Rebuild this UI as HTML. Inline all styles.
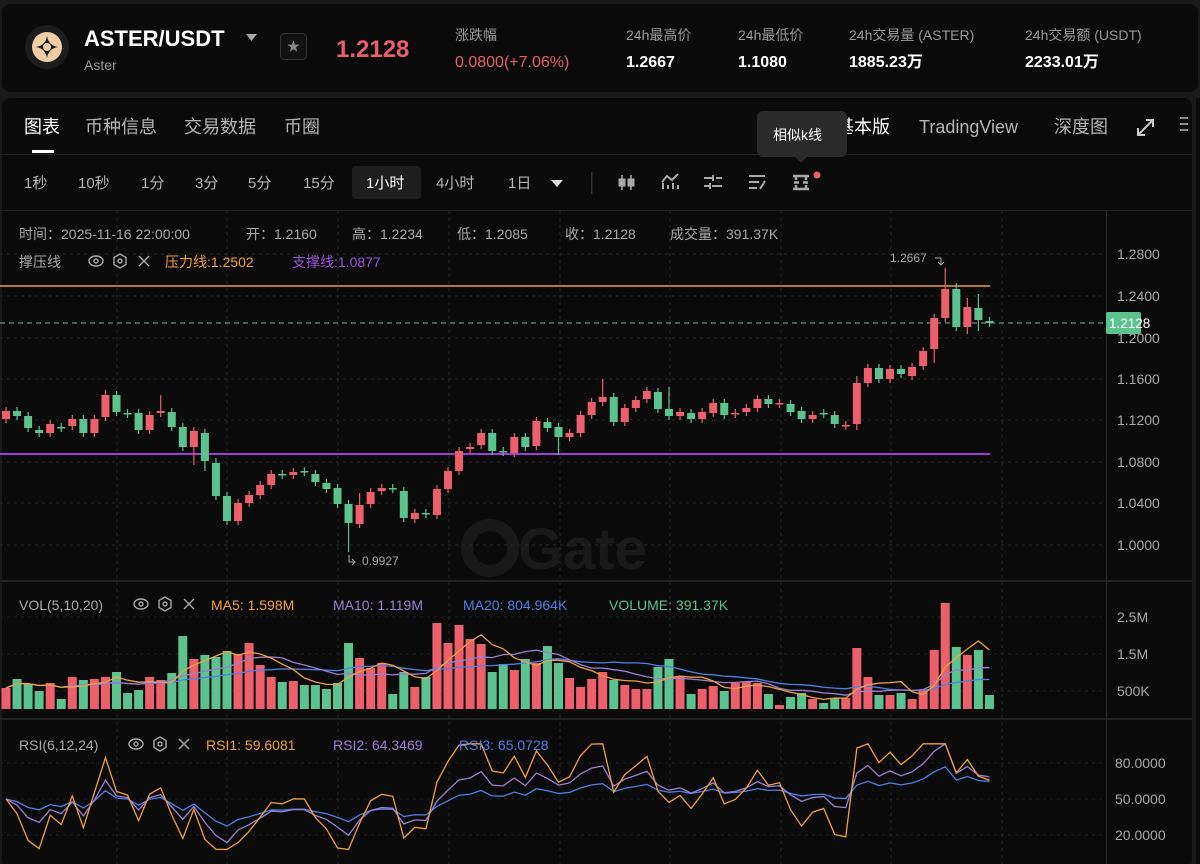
<!DOCTYPE html>
<html><head><meta charset="utf-8">
<style>
html,body{margin:0;padding:0;background:#1a1a1a;width:1200px;height:864px;overflow:hidden}
svg{display:block}
text{font-family:"Liberation Sans","Noto Sans CJK SC",sans-serif}
</style></head>
<body>
<svg id="s" width="1200" height="864" viewBox="0 0 1200 864" xmlns="http://www.w3.org/2000/svg">
<rect x="0" y="0" width="1200" height="864" fill="#1a1a1a"/>
<rect x="2" y="4" width="1196" height="88" rx="8" fill="#0b0b0b"/>
<rect x="2" y="98" width="1190" height="770" rx="8" fill="#0b0b0b"/>
<rect x="1196" y="98" width="10" height="770" fill="#0b0b0b"/>
<!-- logo -->
<circle cx="47" cy="47" r="22" fill="#1d1d1d"/>
<circle cx="47" cy="47" r="15" fill="#f1cda3"/>
<path d="M47 36 Q48.5 45.5 58 47 Q48.5 48.5 47 58 Q45.5 48.5 36 47 Q45.5 45.5 47 36Z" fill="#141414"/>
<circle cx="47" cy="47" r="4" fill="#f1cda3"/>
<text x="84" y="46" font-size="22" font-weight="bold" fill="#fff">ASTER/USDT</text>
<path d="M246 34 L257 34 L251.5 41Z" fill="#aaa"/>
<text x="84" y="70" font-size="14" fill="#9a9a9a">Aster</text>
<rect x="280.5" y="33.5" width="26" height="26" rx="4" fill="#111" stroke="#333"/>
<path d="M293.5 40 L295 44.5 L299.5 44.6 L296 47.4 L297.2 51.8 L293.5 49.2 L289.8 51.8 L291 47.4 L287.5 44.6 L292 44.5Z" fill="#888"/>
<text x="336" y="57" font-size="24" font-weight="bold" fill="#e8606c">1.2128</text>
<text x="455" y="40" font-size="14" fill="#9a9a9a">涨跌幅</text>
<text x="455" y="67" font-size="16" fill="#e8606c">0.0800(+7.06%)</text>
<g font-size="14" fill="#9a9a9a">
<text x="626" y="40">24h最高价</text><text x="738" y="40">24h最低价</text>
<text x="849" y="40">24h交易量 (ASTER)</text><text x="1025" y="40">24h交易额 (USDT)</text></g>
<g font-size="16" fill="#fff" font-weight="bold">
<text x="626" y="67">1.2667</text><text x="738" y="67">1.1080</text>
<text x="849" y="67">1885.23万</text><text x="1025" y="67">2233.01万</text></g>
<!-- tabs -->
<text x="24" y="133" font-size="18" fill="#fff">图表</text>
<rect x="32" y="150" width="22" height="3" fill="#fff"/>
<g font-size="18" fill="#b5b5b5"><text x="85" y="133">币种信息</text><text x="184" y="133">交易数据</text><text x="284" y="133">币圈</text>
<text x="836" y="133" fill="#fff">基本版</text><text x="919" y="133">TradingView</text><text x="1054" y="133">深度图</text></g>
<g stroke="#ccc" stroke-width="2" fill="none"><path d="M1139 134 L1152 121 M1146 120 L1153 120 L1153 127 M1138 128 L1138 135 L1145 135"/></g>
<g stroke="#888" stroke-width="2"><path d="M1180 118h8M1180 124h8M1180 130h8"/></g>
<rect x="0" y="154" width="1192" height="1" fill="#222"/>
<!-- tooltip -->
<rect x="757" y="111" width="90" height="46" rx="6" fill="#2b2b2b"/>
<path d="M795 157 L801 163 L807 157Z" fill="#2b2b2b"/>
<text x="773" y="140" font-size="14" fill="#fff">相似k线</text>
<!-- intervals -->
<rect x="352" y="166" width="69" height="33" rx="4" fill="#1f1f1f"/>
<g font-size="15" fill="#b5b5b5">
<text x="24" y="188">1秒</text><text x="78" y="188">10秒</text><text x="141" y="188">1分</text><text x="195" y="188">3分</text>
<text x="248" y="188">5分</text><text x="303" y="188">15分</text><text x="366" y="188" fill="#fff">1小时</text>
<text x="436" y="188">4小时</text><text x="508" y="188">1日</text></g>
<path d="M551 180 L563 180 L557 187Z" fill="#ddd"/>
<rect x="591" y="172" width="1.5" height="22" fill="#333"/>
<g fill="#aaa" stroke="#aaa">
<path d="M622 175v15M631 175v15" stroke-width="1.5"/><rect x="618.5" y="178.5" width="7" height="8" stroke="none"/><rect x="627.5" y="178.5" width="7" height="8" stroke="none"/>
<path d="M663 189v-6M668 189v-4M673 189v-6M678 189v-4" stroke-width="2"/>
<path d="M662 182 L667 176 L672 180 L678 174" fill="none" stroke-width="2"/>
<path d="M704 178h9M716 178h6M704 186h5M712 186h10M713 175v6M710 183v6" stroke-width="2" fill="none"/>
<path d="M749 176h16M749 182h10M749 188h8M760 189 L765 181" stroke-width="2" fill="none"/>
<path d="M793 176h16M793 189h16M796 176v4M806 176v4M796 185v4M806 185v4M794 182.5h14" stroke-width="2.5" fill="none"/>
</g>
<rect x="799" y="178" width="4" height="8" fill="#0b0b0b"/>
<circle cx="817" cy="175" r="3.5" fill="#e8606c"/>
<rect x="0" y="210" width="1192" height="1" fill="#222"/>
<!-- watermark -->
<g opacity="0.06" fill="#fff"><circle cx="490" cy="548" r="23" fill="none" stroke="#fff" stroke-width="12"/>
<text x="518" y="569" font-size="58" font-weight="bold">Gate</text></g>
<g id="chart"></g>
<!-- axis border -->
<rect x="1106" y="211" width="1" height="657" fill="#2a2a2a"/>
<rect x="0" y="580" width="1192" height="2" fill="#222"/>
<rect x="0" y="718" width="1192" height="2" fill="#222"/>
<!-- info -->
<g font-size="14" fill="#a8a8a8">
<text x="19" y="239">时间：2025-11-16 22:00:00</text><text x="246" y="239">开：1.2160</text><text x="352" y="239">高：1.2234</text>
<text x="457" y="239">低：1.2085</text><text x="565" y="239">收：1.2128</text><text x="670" y="239">成交量：391.37K</text>
<text x="19" y="267">撑压线</text>
<text x="19" y="610">VOL(5,10,20)</text>
<text x="19" y="750">RSI(6,12,24)</text></g>
<g font-size="14">
<text x="165" y="267" fill="#f0a040">压力线:1.2502</text><text x="292" y="267" fill="#a052e0">支撑线:1.0877</text>
<text x="211" y="610" fill="#f0a040">MA5: 1.598M</text><text x="333" y="610" fill="#9a7fd2">MA10: 1.119M</text>
<text x="463" y="610" fill="#4f7fe6">MA20: 804.964K</text><text x="609" y="610" fill="#5cc38f">VOLUME: 391.37K</text>
<text x="206" y="750" fill="#f0a040">RSI1: 59.6081</text><text x="333" y="750" fill="#9a7fd2">RSI2: 64.3469</text>
<text x="459" y="750" fill="#4f7fe6">RSI3: 65.0728</text></g>
<g id="icons" stroke="#aaa" stroke-width="1.4" fill="none"></g>
<g font-size="14" fill="#a8a8a8">
<text x="1117" y="259">1.2800</text><text x="1117" y="301">1.2400</text><text x="1117" y="343">1.2000</text>
<text x="1117" y="384">1.1600</text><text x="1117" y="425">1.1200</text><text x="1117" y="467">1.0800</text>
<text x="1117" y="508">1.0400</text><text x="1117" y="550">1.0000</text>
<text x="1117" y="622">2.5M</text><text x="1117" y="659">1.5M</text><text x="1117" y="696">500K</text>
<text x="1115" y="768">80.0000</text><text x="1115" y="804">50.0000</text><text x="1115" y="840">20.0000</text></g>
<rect x="1106" y="312" width="35" height="22" rx="2" fill="#5cc38f"/>
<text x="1109" y="328" font-size="13.5" fill="#fff">1.2128</text>
<text x="890" y="262" font-size="12" fill="#a8a8a8">1.2667</text>
<path d="M935 258h6v6M938 262l3 3 3-3" stroke="#aaa" fill="none"/>
<text x="362" y="565" font-size="12" fill="#a8a8a8">0.9927</text>
<path d="M349 555v7h6M352 559l3 3-3 3" stroke="#aaa" fill="none"/>
</svg>
<script>
var NS="http://www.w3.org/2000/svg",g=document.getElementById('chart');
function el(t,a,p){var e=document.createElementNS(NS,t);for(var k in a)e.setAttribute(k,a[k]);(p||g).appendChild(e);return e;}
var gx=[117,227,338,449,560,670,781,891,1002];
gx.forEach(function(x){el('line',{x1:x,y1:211,x2:x,y2:864,stroke:'#2a2a2a','stroke-dasharray':'3 4'});});
[254,296,338,379,420,462,503,545].forEach(function(y){el('line',{x1:0,y1:y,x2:1106,y2:y,stroke:'#2a2a2a','stroke-dasharray':'3 4'});});
[617,654,691,763,799,835].forEach(function(y){el('line',{x1:0,y1:y,x2:1106,y2:y,stroke:'#222','stroke-dasharray':'3 4'});});
el('line',{x1:0,y1:286,x2:990,y2:286,stroke:'#f0a040','stroke-width':1.5});
el('line',{x1:0,y1:454,x2:990,y2:454,stroke:'#9a3fd8','stroke-width':2});
el('line',{x1:0,y1:323,x2:1106,y2:323,stroke:'#5cc38f','stroke-dasharray':'5 4'});
var C="r411-419 g411-416 g416-428 g430-433 r424-433 g427-428 r419-426 g419-433 r419-433 r395-417 g395-412 g413-414 g413-430 r415-430 r411-413 g412-427 g427-447 r431-447 g433-461 g463-496 g496-521 r503-521 r495-503 r485-495 r474-485 g474-475 r472-475 g471-472 g474-482 g483-489 g488-504 g504-523 r505-524 r492-504 r488-491 g488-489 g491-518 r513-519 g513-514 r489-515 r471-489 r451-471 r447-449 r433-445 g433-451 g451-452 r437-453 g437-447 r421-446 g422-428 g427-437 r433-437 r415-433 r402-415 r397-402 g397-422 r408-422 r400-408 r391-399 g392-409 g409-416 r412-416 g413-419 r412-419 r403-413 g403-415 r413-414 r408-412 r399-408 g399-404 r403-404 g404-412 g411-419 r415-419 g413-414 g415-424 r425-426 r383-424 r368-383 g368-379 r369-379 g369-374 r367-376 r351-366 r318-349 r289-318 g289-327 r307-327 g308-320 g321-323".split(' ');
var W={10:[390],15:[395],19:[0,471],20:[458],32:[0,552],33:[493],51:[0,455],55:[379],61:[387],78:[376,430],85:[0,363],86:[268],87:[283,331],88:[298,334],89:[294,331],18:[0,465]};
var V=[688,679,684,691,683,699,677,680,679,677,672,693,690,677,680,673,636,659,655,657,651,654,643,665,677,682,681,685,685,689,683,643,658,668,663,694,672,687,677,623,643,625,639,644,672,664,670,659,663,646,663,678,687,679,672,680,685,689,689,667,659,677,694,689,686,691,683,682,683,694,705,697,693,699,703,698,698,648,677,695,695,693,699,690,650,603,647,655,650,695];
var RED='#ec5f6b',GRN='#5cc38f',closes=[],vols=[],xs=[];
C.forEach(function(s,i){var n=i+1,c=s[0]=='r'?RED:GRN,p=s.slice(1).split('-'),t=+p[0],b=+p[1],x=6+i*11.05;
 var wt=t-4,wb=b+4;if(W[n]){if(W[n][0])wt=W[n][0];if(W[n][1])wb=W[n][1];}
 el('line',{x1:x,y1:wt,x2:x,y2:wb,stroke:c,'stroke-width':1.2});
 el('rect',{x:x-4,y:t,width:8,height:Math.max(b-t,1.5),fill:c});
 var vy=V[i];el('rect',{x:x-4.5,y:vy,width:9,height:709-vy,fill:c});
 xs.push(x);vols.push(709-vy);closes.push(s[0]=='r'?t:b);});
function ma(n){var pts=[];for(var i=0;i<vols.length;i++){var a=0,k=0;for(var j=Math.max(0,i-n+1);j<=i;j++){a+=vols[j];k++;}pts.push(xs[i]+','+(709-a/k));}return pts.join(' ');}
el('polyline',{points:ma(20),fill:'none',stroke:'#4f7fe6','stroke-width':1.3});
el('polyline',{points:ma(10),fill:'none',stroke:'#9a7fd2','stroke-width':1.3});
el('polyline',{points:ma(5),fill:'none',stroke:'#f0a040','stroke-width':1.3});
var pr=closes.map(function(y){return 1.28-(y-254)*0.04/41.6;});
function rsi(n,amp){var ag=0,al=0,pts=[];for(var i=0;i<pr.length;i++){var d=i?pr[i]-pr[i-1]:0,u=Math.max(d,0),l=Math.max(-d,0);
 if(i==0){ag=0.003;al=0.003;}else{ag=(ag*(n-1)+u)/n;al=(al*(n-1)+l)/n;}
 var r=100*ag/(ag+al);r=50+(r-50)*amp;r=Math.max(8,Math.min(96,r));pts.push(xs[i]+','+(799-(r-50)*1.2));}return pts.join(' ');}
el('polyline',{points:rsi(24,1.3),fill:'none',stroke:'#4f7fe6','stroke-width':1.3});
el('polyline',{points:rsi(12,1.5),fill:'none',stroke:'#9a7fd2','stroke-width':1.3});
el('polyline',{points:rsi(6,1.8),fill:'none',stroke:'#f0a040','stroke-width':1.3});
var ic=document.getElementById('icons');
[[96,261],[141,604],[136,744]].forEach(function(p){var x=p[0],y=p[1];
 el('ellipse',{cx:x,cy:y,rx:7,ry:5},ic);el('circle',{cx:x,cy:y,r:2},ic);
 el('path',{d:'M'+(x+24)+' '+(y-7)+'l6 3.5v7l-6 3.5l-6-3.5v-7z'},ic);el('circle',{cx:x+24,cy:y,r:2},ic);
 el('path',{d:'M'+(x+43)+' '+(y-5)+'l10 10M'+(x+53)+' '+(y-5)+'l-10 10'},ic);});
</script>
</body></html>
